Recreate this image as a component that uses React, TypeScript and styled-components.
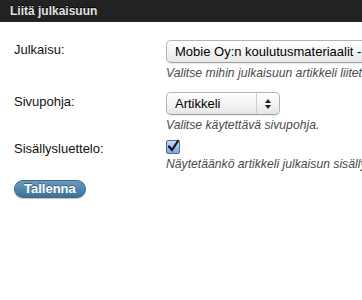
import { FC } from "react";
import styled, { createGlobalStyle } from "styled-components";

const Global = createGlobalStyle`
  html, body {
    margin: 0;
    padding: 0;
    background: #fff;
    overflow: hidden;
  }
  body {
    font-family: "Liberation Sans", Arial, sans-serif;
  }
`;

const Page = styled.div`
  width: 362px;
  height: 300px;
  overflow: hidden;
  background: #fff;
`;

const Header = styled.div`
  height: 22px;
  background: #222;
  color: #e2e2e2;
  font-size: 12px;
  font-weight: bold;
  line-height: 22px;
  padding-left: 10px;
  text-shadow: 0 -1px 0 #000;
  white-space: nowrap;
`;

const Form = styled.div`
  padding: 18px 0 0 14px;
`;

const Row = styled.div<{ h: number }>`
  display: grid;
  grid-template-columns: 152px 1fr;
  min-height: ${(p) => p.h}px;
`;

const Label = styled.div`
  font-size: 13px;
  color: #111;
  padding-top: 2px;
  white-space: nowrap;
`;

const Field = styled.div`
  display: flex;
  flex-direction: column;
  align-items: flex-start;
  white-space: nowrap;
`;

const Select = styled.div<{ w: number }>`
  box-sizing: border-box;
  width: ${(p) => p.w}px;
  height: 23px;
  border: 1px solid #b4b4b4;
  border-bottom-color: #a0a0a0;
  border-radius: 5px;
  background: linear-gradient(#fff, #f4f4f4 50%, #e6e6e6);
  box-shadow: 0 1px 1px rgba(0, 0, 0, 0.08);
  display: flex;
  align-items: center;
  font-size: 13px;
  color: #000;
  padding-left: 8px;
  overflow: hidden;
`;

const SelectText = styled.span`
  flex: 1;
`;

const Arrows = styled.span`
  width: 22px;
  height: 100%;
  border-left: 1px solid #cfcfcf;
  display: flex;
  align-items: center;
  justify-content: center;
`;

const Hint = styled.div`
  font-size: 12.2px;
  font-style: italic;
  color: #4a4a4a;
  margin-top: 3px;
`;

const Check = styled.div`
  width: 12px;
  height: 12px;
  margin-top: 1px;
  border: 1px solid #4c6d97;
  border-radius: 2px;
  background: linear-gradient(#c6dbf5, #7fa8de);
  display: flex;
  align-items: center;
  justify-content: center;
`;

const Button = styled.button`
  margin-top: 4px;
  height: 18px;
  padding: 0 9px;
  border: 1px solid #3a6a8c;
  border-radius: 9px;
  background: linear-gradient(#6a9abd, #3d7199);
  color: #fff;
  font-family: "Liberation Sans", Arial, sans-serif;
  font-size: 13px;
  font-weight: bold;
  line-height: 16px;
  text-shadow: 0 -1px 0 rgba(0, 0, 0, 0.35);
  box-shadow: 0 1px 1px rgba(0, 0, 0, 0.25);
`;

const UpDown: FC = () => (
  <svg width="6" height="10" viewBox="0 0 6 10">
    <path d="M0 4 L3 0 L6 4 Z" fill="#222" />
    <path d="M0 6 L3 10 L6 6 Z" fill="#222" />
  </svg>
);

const Tick: FC = () => (
  <svg width="12" height="12" viewBox="0 0 12 12" style={{ overflow: "visible" }}>
    <path d="M2 5.5 L5 9 L11 0" stroke="#111" strokeWidth="2.2" fill="none" strokeLinecap="round" />
  </svg>
);

export default function App() {
  return (
    <Page>
      <Global />
      <Header>Liitä julkaisuun</Header>
      <Form>
        <Row h={52}>
          <Label>Julkaisu:</Label>
          <Field>
            <Select w={260}>
              <SelectText>Mobie Oy:n koulutusmateriaalit - Artikkelit</SelectText>
            </Select>
            <Hint>Valitse mihin julkaisuun artikkeli liitetään.</Hint>
          </Field>
        </Row>
        <Row h={47}>
          <Label>Sivupohja:</Label>
          <Field>
            <Select w={114}>
              <SelectText>Artikkeli</SelectText>
              <Arrows>
                <UpDown />
              </Arrows>
            </Select>
            <Hint>Valitse käytettävä sivupohja.</Hint>
          </Field>
        </Row>
        <Row h={37}>
          <Label>Sisällysluettelo:</Label>
          <Field>
            <Check>
              <Tick />
            </Check>
            <Hint>Näytetäänkö artikkeli julkaisun sisällysluettelossa.</Hint>
          </Field>
        </Row>
        <Button>Tallenna</Button>
      </Form>
    </Page>
  );
}
